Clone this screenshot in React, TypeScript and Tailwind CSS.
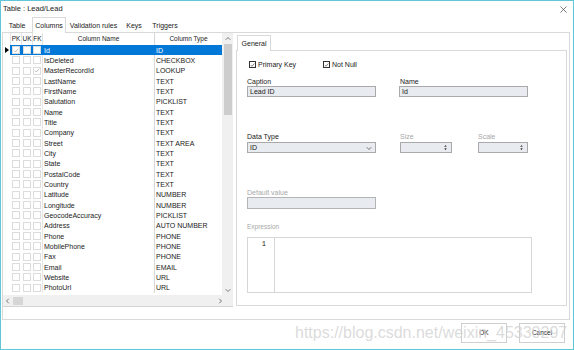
const rows: [string, string, boolean, boolean][] = [
  ["Id", "ID", true, false],
  ["IsDeleted", "CHECKBOX", false, false],
  ["MasterRecordId", "LOOKUP", false, true],
  ["LastName", "TEXT", false, false],
  ["FirstName", "TEXT", false, false],
  ["Salutation", "PICKLIST", false, false],
  ["Name", "TEXT", false, false],
  ["Title", "TEXT", false, false],
  ["Company", "TEXT", false, false],
  ["Street", "TEXT AREA", false, false],
  ["City", "TEXT", false, false],
  ["State", "TEXT", false, false],
  ["PostalCode", "TEXT", false, false],
  ["Country", "TEXT", false, false],
  ["Latitude", "NUMBER", false, false],
  ["Longitude", "NUMBER", false, false],
  ["GeocodeAccuracy", "PICKLIST", false, false],
  ["Address", "AUTO NUMBER", false, false],
  ["Phone", "PHONE", false, false],
  ["MobilePhone", "PHONE", false, false],
  ["Fax", "PHONE", false, false],
  ["Email", "EMAIL", false, false],
  ["Website", "URL", false, false],
  ["PhotoUrl", "URL", false, false],
];

function Tick({ className }: { className?: string }) {
  return (
    <svg viewBox="0 0 8 8" className={className}>
      <path d="M1.3 4.1 L3.2 6 L6.9 1.6" fill="none" stroke="currentColor" strokeWidth="0.9" />
    </svg>
  );
}

function GridCheck({ checked, w }: { checked: boolean; w: string }) {
  return (
    <div className={`${w} h-full flex items-center justify-center`}>
      <div className="w-[8px] h-[8px] border border-[#dcdcdc] bg-white flex items-center justify-center">
        {checked && <Tick className="w-[7px] h-[7px] text-[#a0a0a0]" />}
      </div>
    </div>
  );
}

function Chevron({ dir, className }: { dir: "up" | "down" | "left" | "right"; className?: string }) {
  const d = {
    up: "M1 5 L4 2 L7 5",
    down: "M1 3 L4 6 L7 3",
    left: "M5 1 L2 4 L5 7",
    right: "M3 1 L6 4 L3 7",
  }[dir];
  return (
    <svg viewBox="0 0 8 8" className={className}>
      <path d={d} fill="none" stroke="currentColor" strokeWidth="1.1" />
    </svg>
  );
}

function Spinner({ w }: { w: string }) {
  return (
    <div className={`${w} h-[11px] bg-[#e8ebef] border border-[#a9a9a9] flex items-center justify-end pr-[4px]`}>
      <svg viewBox="0 0 4 8" className="w-[3px] h-[7px]">
        <path d="M2 0.5 L3.6 3 L0.4 3 Z M2 7.5 L3.6 5 L0.4 5 Z" fill="#333" />
      </svg>
    </div>
  );
}

export default function App() {
  return (
    <div className="w-[574px] h-[350px] bg-white border border-[#63c5d8] relative flex flex-col font-['Liberation_Sans',Arial,sans-serif] text-[7px] leading-none text-[#1a1a1a] overflow-hidden">
      {/* title */}
      <div className="h-[16px] flex items-start justify-between pl-[2px] pr-[6px] pt-[4px]">
        <span className="text-[7.5px]">Table : Lead/Lead</span>
        <svg viewBox="0 0 8 8" className="w-[7px] h-[7px] mt-[1px]">
          <path d="M0.5 0.5 L7.5 7.5 M7.5 0.5 L0.5 7.5" stroke="#444" strokeWidth="0.8" />
        </svg>
      </div>

      {/* tabs */}
      <div className="h-[15px] flex items-end pl-[1px]">
        <div className="w-[30px] h-[13px] flex items-center justify-center">Table</div>
        <div className="w-[34px] h-[16px] -mb-px relative z-10 bg-white border border-b-0 border-[#d9d9d9] flex items-center justify-center">
          Columns
        </div>
        <div className="w-[55px] h-[13px] flex items-center justify-center">Validation rules</div>
        <div className="w-[26px] h-[13px] flex items-center justify-center">Keys</div>
        <div className="w-[36px] h-[13px] flex items-center justify-center">Triggers</div>
      </div>

      {/* tab page */}
      <div className="ml-[1px] w-[568px] h-[288px] border border-[#d9d9d9] flex">
        {/* grid */}
        <div className="w-[230px] h-[274px] flex flex-col border-b border-[#d4d4d4]">
          <div className="flex h-[262px]">
            <div className="w-[219px] flex flex-col">
              <div className="h-[12px] flex text-[6.5px]">
                <div className="w-[7px]" />
                <div className="w-[11px] border-l border-[#e3e3e3] flex items-center justify-center">PK</div>
                <div className="w-[11px] border-l border-[#e3e3e3] flex items-center justify-center">UK</div>
                <div className="w-[10px] border-l border-[#e3e3e3] flex items-center justify-center">FK</div>
                <div className="w-[112px] border-l border-[#e3e3e3] flex items-center justify-center">Column Name</div>
                <div className="w-[68px] border-l border-[#d6d6d6] flex items-center justify-center">Column Type</div>
              </div>
              {rows.map(([name, type, pk, fk], i) => {
                const sel = i === 0;
                return (
                  <div key={name} className="h-[10.33px] flex">
                    <div className="w-[7px] flex items-center justify-center">
                      {sel && (
                        <svg viewBox="0 0 4 6" className="w-[4px] h-[6px]">
                          <path d="M0 0 L4 3 L0 6 Z" fill="#000" />
                        </svg>
                      )}
                    </div>
                    <div className={`flex flex-1 ${sel ? "bg-[#0078d7] text-white" : ""}`}>
                      <GridCheck checked={pk} w="w-[11px]" />
                      <GridCheck checked={false} w="w-[11px]" />
                      <GridCheck checked={fk} w="w-[10px]" />
                      <div className={`w-[112px] border-l ${sel ? "border-[#0078d7]" : "border-[#e6e6e6]"} pl-[1px] flex items-center`}>
                        {name}
                      </div>
                      <div className={`w-[68px] border-l ${sel ? "border-[#0078d7]" : "border-[#d9d9d9]"} pl-[1px] flex items-center`}>
                        {type}
                      </div>
                    </div>
                  </div>
                );
              })}
            </div>
            {/* vertical scrollbar */}
            <div className="w-[11px] bg-[#f0f0f0] flex flex-col items-center">
              <div className="h-[11px] flex items-center justify-center">
                <Chevron dir="up" className="w-[6px] h-[6px] text-[#606060]" />
              </div>
              <div className="w-[8px] h-[71px] bg-[#cdcdcd]" />
              <div className="flex-1" />
              <div className="h-[11px] flex items-center justify-center">
                <Chevron dir="down" className="w-[6px] h-[6px] text-[#606060]" />
              </div>
            </div>
          </div>
          {/* horizontal scrollbar */}
          <div className="h-[11px] bg-[#f0f0f0] flex items-center">
            <div className="w-[10px] flex items-center justify-center">
              <Chevron dir="left" className="w-[6px] h-[6px] text-[#606060]" />
            </div>
            <div className="w-[10px] h-[8px] bg-[#d6d6d6]" />
            <div className="flex-1" />
            <div className="w-[10px] flex items-center justify-center mr-[8px]">
              <Chevron dir="right" className="w-[6px] h-[6px] text-[#606060]" />
            </div>
          </div>
        </div>

        {/* right panel */}
        <div className="ml-[3px] w-[331px] flex flex-col pt-[2px]">
          <div className="h-[15px] flex items-end">
            <div className="ml-[1px] w-[34px] h-[16px] -mb-px relative z-10 bg-white border border-b-0 border-[#d9d9d9] flex items-center justify-center">
              General
            </div>
          </div>
          <div className="h-[256px] border border-[#d9d9d9] flex flex-col">
            {/* checkboxes */}
            <div className="mt-[10px] h-[7px] flex items-center pl-[12px]">
              <div className="w-[74px] flex items-center gap-[2px]">
                <div className="w-[7px] h-[7px] border border-[#333] flex items-center justify-center">
                  <Tick className="w-[6px] h-[6px] text-[#222]" />
                </div>
                <span>Primary Key</span>
              </div>
              <div className="flex items-center gap-[2px]">
                <div className="w-[7px] h-[7px] border border-[#333] flex items-center justify-center">
                  <Tick className="w-[6px] h-[6px] text-[#222]" />
                </div>
                <span>Not Null</span>
              </div>
            </div>

            {/* caption / name */}
            <div className="mt-[10px] flex pl-[10px]">
              <div className="w-[129px] flex flex-col">
                <div className="h-[8px]">Caption</div>
                <div className="h-[11px] bg-[#e8ebef] border border-[#a9a9a9] flex items-center pl-[2px]">Lead ID</div>
              </div>
              <div className="ml-[23px] w-[129px] flex flex-col">
                <div className="h-[8px] pl-[1px]">Name</div>
                <div className="h-[11px] bg-[#e8ebef] border border-[#a9a9a9] flex items-center pl-[2px]">Id</div>
              </div>
            </div>

            {/* data type / size / scale */}
            <div className="mt-[35px] flex pl-[10px]">
              <div className="w-[129px] flex flex-col">
                <div className="h-[10px] pt-[1px]">Data Type</div>
                <div className="h-[11px] bg-[#e8ebef] border border-[#a9a9a9] flex items-center justify-between pl-[2px] pr-[3px]">
                  <span>ID</span>
                  <Chevron dir="down" className="w-[6px] h-[6px] text-[#555]" />
                </div>
              </div>
              <div className="ml-[24px] flex flex-col">
                <div className="h-[10px] pt-[1px] text-[#a8a8a8]">Size</div>
                <Spinner w="w-[52px]" />
              </div>
              <div className="ml-[26px] flex flex-col">
                <div className="h-[10px] pt-[1px] text-[#a8a8a8]">Scale</div>
                <Spinner w="w-[50px]" />
              </div>
            </div>

            {/* default value */}
            <div className="mt-[36px] flex flex-col pl-[10px]">
              <div className="h-[8px] text-[#a8a8a8]">Default value</div>
              <div className="w-[129px] h-[12px] bg-[#e8ebef] border border-[#b4b4b4]" />
            </div>

            {/* expression */}
            <div className="mt-[15px] flex flex-col pl-[10px]">
              <div className="h-[13px] text-[#a8a8a8] text-[6.5px]">Expression</div>
              <div className="w-[285px] h-[56px] border border-[#d6d6d6] flex">
                <div className="w-[27px] border-r border-[#d6d6d6] flex justify-end pr-[8px] pt-[3px] font-['Liberation_Mono',monospace] text-[7px]">
                  1
                </div>
              </div>
            </div>
          </div>
        </div>
      </div>

      {/* buttons */}
      <div className="flex-1 flex justify-end items-start pt-[3px] pr-[8px] gap-[12px]">
        <div className="w-[46px] h-[20px] border border-[#cfcfcf] bg-white flex items-center justify-center text-[6.5px]">OK</div>
        <div className="w-[46px] h-[20px] border border-[#cfcfcf] bg-white flex items-center justify-center text-[6.5px]">Cancel</div>
      </div>

      {/* watermark */}
      <div className="absolute left-[294px] top-[324px] text-[16px] text-[#cfcfcf]/75 pointer-events-none">
        https://blog.csdn.net/weixin_45330297
      </div>
    </div>
  );
}
